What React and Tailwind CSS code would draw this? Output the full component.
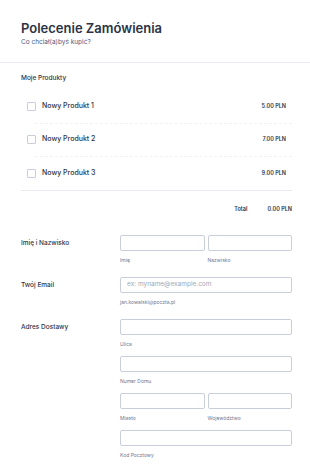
import React from 'react';

const products = [
    { name: "Nowy Produkt 1", price: "5.00 PLN" },
    { name: "Nowy Produkt 2", price: "7.00 PLN" },
    { name: "Nowy Produkt 3", price: "9.00 PLN" },
];

const Field = ({ sub, placeholder }) => (
    <div className="flex-1 flex flex-col">
        <div className="h-[16px] border border-[#c8ceda] rounded-[2px] bg-white flex items-center px-[6px] text-[6.5px] text-[#a0a8b8]">
            {placeholder}
        </div>
        {sub && <span className="mt-[6px] text-[5px] leading-[6px] text-[#6f7790]">{sub}</span>}
    </div>
);

const Row = ({ label, children }) => (
    <div className="flex">
        <div className="w-[99px] leading-[16px] text-[6.5px] font-medium text-[#2c3345]">{label}</div>
        <div className="flex-1 flex flex-col gap-[9px]">{children}</div>
    </div>
);

export default function App() {
    return (
        <div className="w-[310px] h-[469px] bg-white overflow-hidden font-['Inter',sans-serif]">
            {/* Header */}
            <div className="pl-[21px] pt-[19px] pb-[14px] border-b border-[#e8eaef]">
                <h1 className="text-[13px] leading-[18px] font-semibold text-[#2c3345]">Polecenie Zamówienia</h1>
                <p className="mt-[1px] text-[6.5px] text-[#4e5a86]">Co chciał(a)byś kupić?</p>
            </div>

            <div className="pl-[21px] pr-[18px]">
                {/* Products */}
                <div className="pt-[11px] text-[6.5px] font-medium text-[#2c3345]">Moje Produkty</div>
                <div className="mt-[7px] pl-[6px]">
                    {products.map((p, i) => (
                        <div key={i} className={`flex items-center h-[33px] ml-[8px] ${i < 2 ? 'border-b border-dashed border-[#f0f1f4]' : ''}`}>
                            <div className="-ml-[8px] w-[9px] h-[9px] border border-[#c8ceda] rounded-[1px] bg-white"></div>
                            <span className="ml-[6px] text-[7px] font-medium text-[#2c3345]">{p.name}</span>
                            <span className="ml-auto mr-[6px] text-[5.5px] font-semibold text-[#2c3345]">{p.price}</span>
                        </div>
                    ))}
                </div>
                <div className="border-t border-[#e8eaef]"></div>
                <div className="flex justify-end items-center gap-[20px] pt-[14px] text-[5.5px] font-semibold text-[#2c3345]">
                    <span>Total</span>
                    <span>0.00 PLN</span>
                </div>

                {/* Form */}
                <div className="mt-[22px] flex flex-col gap-[14px]">
                    <Row label="Imię i Nazwisko">
                        <div className="flex gap-[3px]">
                            <Field sub="Imię" />
                            <Field sub="Nazwisko" />
                        </div>
                    </Row>
                    <Row label="Twój Email">
                        <Field sub="jan.kowalski@poczta.pl" placeholder="ex: myname@example.com" />
                    </Row>
                    <Row label="Adres Dostawy">
                        <Field sub="Ulica" />
                        <Field sub="Numer Domu" />
                        <div className="flex gap-[3px]">
                            <Field sub="Miasto" />
                            <Field sub="Województwo" />
                        </div>
                        <Field sub="Kod Pocztowy" />
                    </Row>
                </div>
            </div>
        </div>
    );
}
